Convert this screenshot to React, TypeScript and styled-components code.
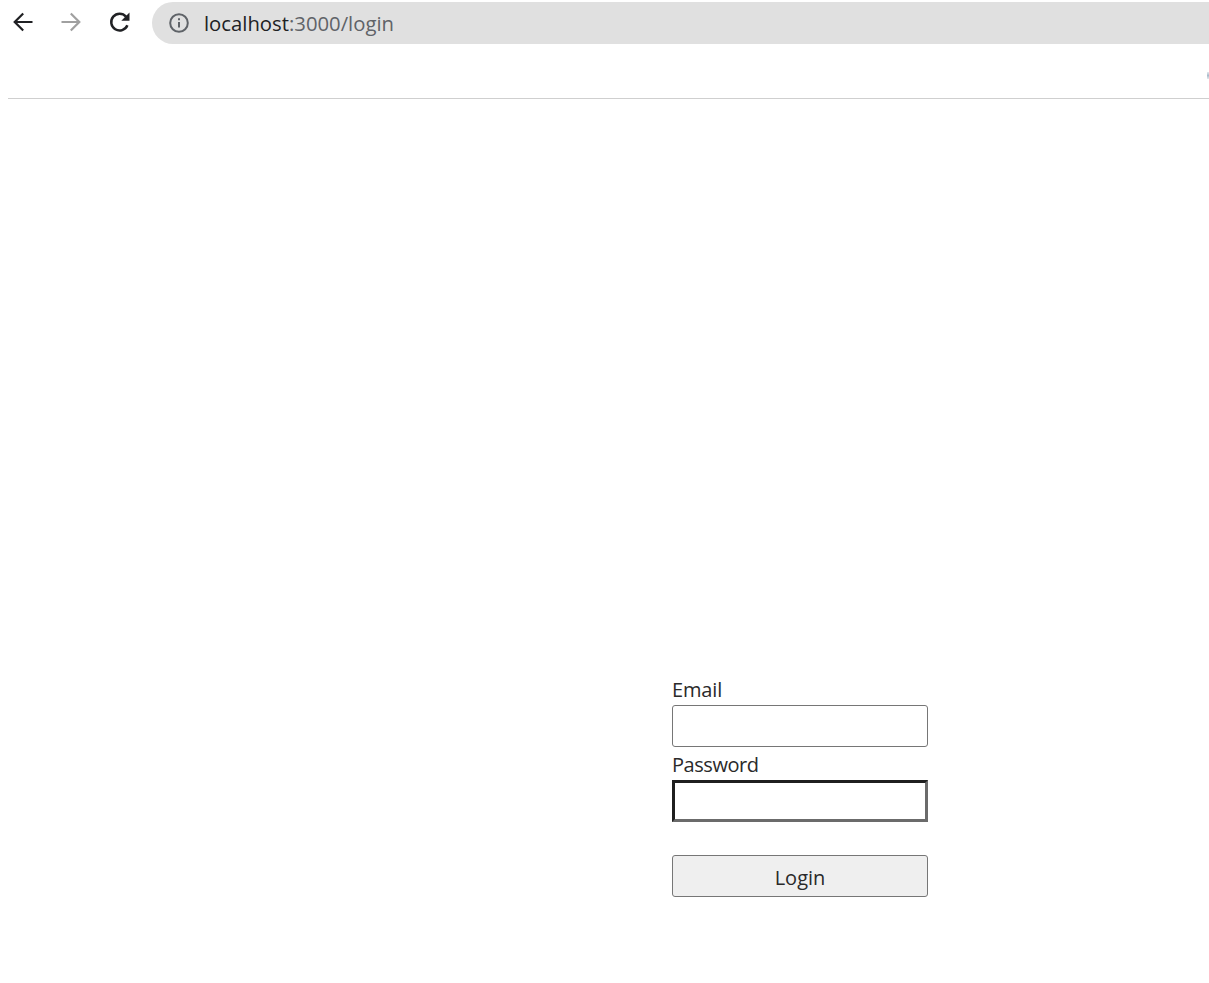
import React from "react";
import styled, { createGlobalStyle } from "styled-components";

const Global = createGlobalStyle`
  html, body { margin: 0; padding: 0; background: #fff; }
  body { font-family: "Open Sans", "Noto Sans", sans-serif; color: #222; }
`;

const Page = styled.div`
  width: 1209px;
  height: 983px;
  overflow: hidden;
  display: flex;
  flex-direction: column;
`;

const BrowserBar = styled.div`
  height: 44px;
  padding-top: 2px;
  box-sizing: border-box;
  display: flex;
  align-items: stretch;
`;

const NavIcon = styled.span<{ $w: number }>`
  width: ${(p) => p.$w}px;
  display: flex;
  align-items: center;
  justify-content: center;
  margin-top: -2px;
`;

const Omnibox = styled.div`
  flex: 1;
  margin-left: 9px;
  height: 42px;
  display: flex;
  align-items: center;
  padding-left: 17px;
  gap: 15px;
  background: #e0e0e0;
  border-radius: 21px 0 0 21px;
  font-family: "Open Sans", sans-serif;
  font-size: 20.3px;
  color: #5f6368;
`;

const Host = styled.span`
  color: #202124;
`;

const Spacer = styled.div`
  height: 54px;
  position: relative;
`;

const Speck = styled.span`
  position: absolute;
  right: 0;
  top: 28px;
  width: 2px;
  height: 7px;
  background: linear-gradient(#e4e9ee, #a9bccb, #e4e9ee);
`;

const Divider = styled.div`
  margin-left: 8px;
  height: 1px;
  background: #cfcfcf;
`;

const FormArea = styled.div`
  flex: 1;
  display: flex;
  padding: 579px 0 0 672px;
`;

const Form = styled.form`
  width: 256px;
  display: flex;
  flex-direction: column;
`;

const Label = styled.label<{ $tight?: boolean }>`
  font-size: 20px;
  line-height: 23px;
  height: 27px;
  letter-spacing: ${(p) => (p.$tight ? "-0.45px" : "-0.15px")};
  color: #2a2a2a;
`;

const Input = styled.input<{ $focused?: boolean }>`
  box-sizing: border-box;
  width: 256px;
  height: 42px;
  margin-bottom: 6px;
  background: #fff;
  outline: none;
  padding: 0 8px;
  border-radius: ${(p) => (p.$focused ? "0" : "3px")};
  border-style: solid;
  border-width: ${(p) => (p.$focused ? "3px" : "1px")};
  border-color: ${(p) => (p.$focused ? "#1f1f1f #6b6b6b #6b6b6b #1f1f1f" : "#767676")};
`;

const Button = styled.button`
  box-sizing: border-box;
  width: 256px;
  height: 42px;
  margin-top: 27px;
  background: #efefef;
  border: 1px solid #767676;
  border-radius: 3px;
  font-family: "Open Sans", sans-serif;
  font-size: 20px;
  color: #2a2a2a;
  padding: 2px 0 0;
`;

export default function App() {
  return (
    <Page>
      <Global />
      <BrowserBar>
        <NavIcon $w={46}>
          <svg width="24" height="24" viewBox="0 0 24 24" fill="none" stroke="#202124" strokeWidth="2.2">
            <path d="M21.5 12H4M12.2 3.5L3.7 12l8.5 8.5" />
          </svg>
        </NavIcon>
        <NavIcon $w={50}>
          <svg width="24" height="24" viewBox="0 0 24 24" fill="none" stroke="#a0a0a0" strokeWidth="2.2">
            <path d="M2.5 12h17.5M11.8 3.5l8.5 8.5-8.5 8.5" />
          </svg>
        </NavIcon>
        <NavIcon $w={47}>
          <svg width="24" height="24" viewBox="0 0 24 24" fill="none">
            <path d="M19.4 15.3A8.4 8.4 0 1 1 18 6.6" stroke="#202124" strokeWidth="2.5" />
            <path d="M21.5 2.5v8.2h-8.2z" fill="#202124" />
          </svg>
        </NavIcon>
        <Omnibox>
          <svg width="20" height="20" viewBox="0 0 20 20" fill="none">
            <circle cx="10" cy="10" r="8.8" stroke="#5f6368" strokeWidth="2" />
            <path d="M10 9v5.5M10 5.2v2" stroke="#5f6368" strokeWidth="2" />
          </svg>
          <span>
            <Host>localhost</Host>:3000/login
          </span>
        </Omnibox>
      </BrowserBar>
      <Spacer>
        <Speck />
      </Spacer>
      <Divider />
      <FormArea>
        <Form>
          <Label>Email</Label>
          <Input type="email" />
          <Label $tight>Password</Label>
          <Input type="password" $focused />
          <Button type="button">Login</Button>
        </Form>
      </FormArea>
    </Page>
  );
}
